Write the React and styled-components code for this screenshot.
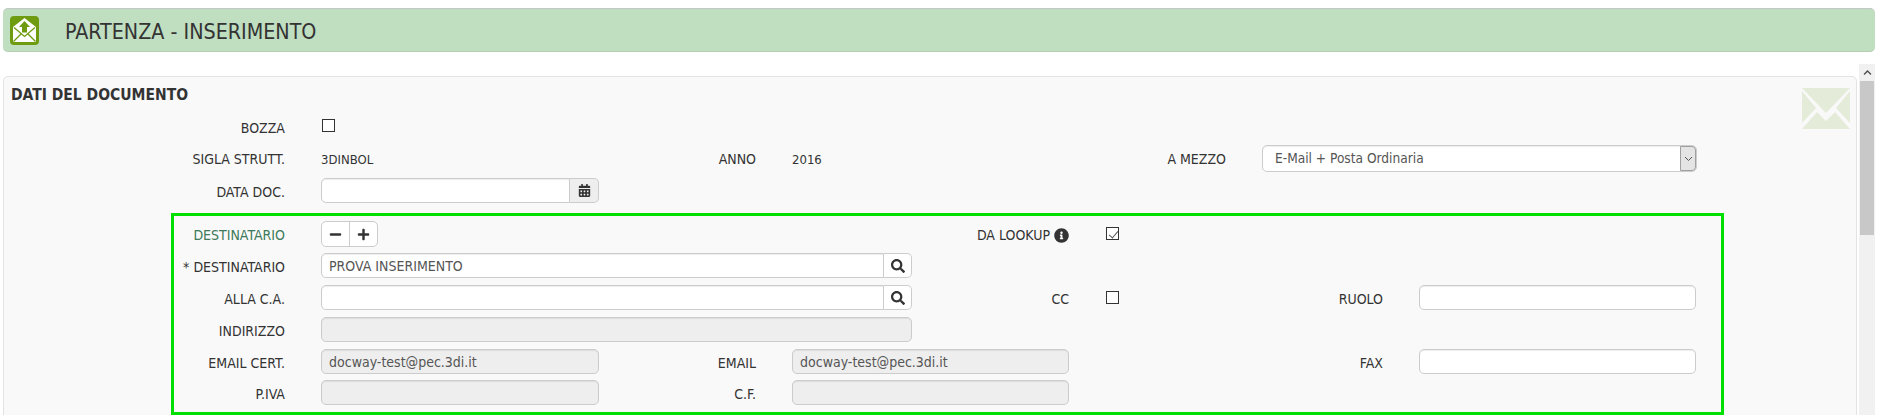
import React from "react";
import styled, { createGlobalStyle } from "styled-components";
import { FaMinus, FaPlus, FaSearch, FaCalendarAlt, FaInfoCircle, FaChevronUp } from "react-icons/fa";

const Global = createGlobalStyle`
  html, body { margin: 0; padding: 0; background: #fff; overflow: hidden; }
  * { box-sizing: border-box; }
`;

const Page = styled.div`
  width: 1880px;
  height: 415px;
  overflow: hidden;
  padding: 8px 5px 0 3px;
  font-family: "DejaVu Sans Condensed", "DejaVu Sans", sans-serif;
  font-size: 14px;
  color: #333;
`;

const TitleBar = styled.header`
  height: 44px;
  display: flex;
  align-items: center;
  gap: 26px;
  padding-left: 7px;
  background: #c0dec0;
  border-top: 1px solid #c4c8c4;
  border-bottom: 1px solid #b4cdb4;
  border-radius: 5px;
`;

const TitleText = styled.h1`
  margin: 2px 0 0;
  font-size: 21.3px;
  font-weight: 400;
  color: #333;
`;

const Body = styled.div`
  margin-top: 12px;
  display: flex;
  gap: 2px;
`;

const Panel = styled.section`
  position: relative;
  flex: 1;
  margin-top: 12px;
  height: 400px;
  background: #f9f9f9;
  border: 1px solid #e3e3e3;
  border-radius: 5px;
  padding: 10px 0 0 8px;
`;

const PanelTitle = styled.h2`
  margin: 0 0 0 -1px;
  font-size: 15.5px;
  line-height: 17px;
  font-weight: 700;
  color: #333;
`;

const Watermark = styled.svg`
  position: absolute;
  top: 11px;
  right: 6px;
  width: 48px;
  height: 41px;
`;

const Scrollbar = styled.div`
  width: 16px;
  height: 351px;
  background: #f1f1f1;
  display: flex;
  flex-direction: column;
`;

const ScrollButton = styled.div`
  height: 17px;
  display: flex;
  align-items: center;
  justify-content: center;
  color: #505050;
  font-size: 9px;
`;

const ScrollThumb = styled.div`
  height: 154px;
  background: #c8c8c8;
  margin: 0 1px;
`;

const FormGrid = styled.div`
  display: grid;
  grid-template-columns: 111px 278px 121px 277px ${(p) => p.$c5}px ${(p) => p.$c6}px;
  grid-template-rows: ${(p) => p.$rows};
  column-gap: 36px;
  align-items: start;
`;

const TopGrid = styled(FormGrid)`
  margin: 10px 0 0 162px;
`;

const RecipientBox = styled.div`
  margin: 10px 0 0 159px;
  width: 1553px;
  height: 202px;
  border: 3px solid #00e000;
  padding: 5px 0 0 0;
`;

const Label = styled.label`
  display: ${(p) => (p.$withIcon ? "flex" : "block")};
  justify-content: flex-end;
  align-items: center;
  gap: 4px;
  text-align: right;
  line-height: 29px;
  white-space: nowrap;
  color: ${(p) => (p.$accent ? "#3c7a5a" : "#333")};
`;

const Value = styled.span`
  font-size: 13px;
  line-height: 29px;
`;

const Check = styled.span`
  display: block;
  position: relative;
  width: 13px;
  height: 13px;
  margin: ${(p) => p.$top || 6}px 0 0 1px;
  border: 1px solid #333;
  background: #fff;
  ${(p) =>
    p.$checked &&
    `&::after {
      content: "";
      position: absolute;
      left: 3.5px;
      top: 0.5px;
      width: 4px;
      height: 8px;
      border: solid #555;
      border-width: 0 1px 1px 0;
      transform: rotate(40deg);
    }`}
`;

const CheckAndLabel = styled.div`
  display: flex;
  justify-content: space-between;
  align-items: flex-start;
`;

const InputGroup = styled.div`
  display: flex;
  height: 25px;
  width: ${(p) => (p.$wide ? "591px" : "auto")};
`;

const Field = styled.div`
  flex: 1;
  height: 25px;
  width: ${(p) => (p.$wide ? "591px" : "auto")};
  line-height: 24px;
  padding: 0 7px;
  color: #555;
  white-space: nowrap;
  background: ${(p) => (p.disabled ? "#eee" : "#fff")};
  border: 1px solid #ccc;
  border-radius: ${(p) => (p.$joined ? "5px 0 0 5px" : "5px")};
  box-shadow: inset 0 1px 1px rgba(0, 0, 0, 0.075);
`;

const Addon = styled.span`
  width: ${(p) => p.$w}px;
  display: flex;
  align-items: center;
  justify-content: center;
  background: ${(p) => (p.$grey ? "#eee" : "#fff")};
  border: 1px solid #ccc;
  border-left: 0;
  border-radius: 0 5px 5px 0;
  color: #333;
  font-size: ${(p) => p.$icon || 13}px;
`;

const ButtonGroup = styled.div`
  display: inline-flex;
  width: 57px;
  height: 26px;
  background: #fff;
  border: 1px solid #ccc;
  border-radius: 5px;
`;

const GroupButton = styled.button`
  flex: 1;
  padding: 0;
  border: 0;
  background: transparent;
  color: #333;
  font-size: 13px;
  display: flex;
  align-items: center;
  justify-content: center;
  & + & { border-left: 1px solid #ccc; }
`;

const Select = styled.div`
  display: flex;
  height: 27px;
  background: #fff;
  border: 1px solid #ccc;
  border-radius: 5px;
  box-shadow: inset 0 1px 1px rgba(0, 0, 0, 0.075);
`;

const SelectText = styled.span`
  flex: 1;
  font-size: 13.6px;
  line-height: 24px;
  padding-left: 12px;
  color: #555;
`;

const SelectArrow = styled.span`
  width: 16px;
  display: flex;
  align-items: center;
  justify-content: center;
  background: #e4e4e4;
  border: 1px solid #a0a0a0;
  border-radius: 0 4px 4px 0;
`;

const Wide = styled.div`
  grid-column: 2 / span 2;
`;

const FirstLabel = styled(Label)`
  grid-column: 1;
`;

const LookupLabel = styled(Label)`
  grid-column: 4;
`;

const FaxLabel = styled(Label)`
  grid-column: 5;
`;

export default function App() {
  return (
    <Page>
      <Global />
      <TitleBar>
        <svg width="29" height="29" viewBox="0 0 29 29">
          <rect width="29" height="29" rx="4" fill="#6f9b10" />
          <path d="M14.5 2 L26 11 V26 H3 V11 Z" fill="#fff" />
          <path d="M3.5 25.5 L11.5 17.5 M25.5 25.5 L17.5 17.5 M4 11.5 L14.5 20.5 L25 11.5" fill="none" stroke="#6f9b10" strokeWidth="1.3" />
          <path d="M14.5 5 L20 11 H17 V16.5 H12 V11 H9 Z" fill="#6f9b10" />
        </svg>
        <TitleText>PARTENZA - INSERIMENTO</TitleText>
      </TitleBar>
      <Body>
        <Panel>
          <PanelTitle>DATI DEL DOCUMENTO</PanelTitle>
          <Watermark viewBox="0 0 48 41">
            <path d="M0 0 H48 L24 25 Z M0 3 L14 20 L0 35 Z M48 3 L34 20 L48 35 Z M0 41 L15 24 L24 33 L33 24 L48 41 Z" fill="#e4ecd9" />
          </Watermark>
          <TopGrid $c5={121} $c6={435} $rows="31px 33px 25px">
            <Label>BOZZA</Label>
            <Check $top={5} />
            <FirstLabel>SIGLA STRUTT.</FirstLabel>
            <Value>3DINBOL</Value>
            <Label>ANNO</Label>
            <Value>2016</Value>
            <Label>A MEZZO</Label>
            <Select>
              <SelectText>E-Mail + Posta Ordinaria</SelectText>
              <SelectArrow>
                <svg width="9" height="6" viewBox="0 0 9 6"><path d="M1 1 L4.5 4.5 L8 1" fill="none" stroke="#555" /></svg>
              </SelectArrow>
            </Select>
            <Label>DATA DOC.</Label>
            <InputGroup>
              <Field $joined />
              <Addon $w={29} $grey><FaCalendarAlt /></Addon>
            </InputGroup>
          </TopGrid>
          <RecipientBox>
            <FormGrid $c5={278} $c6={277} $rows="32px 32px 32px 32px 31px 25px">
              <Label $accent>DESTINATARIO</Label>
              <ButtonGroup>
                <GroupButton><FaMinus /></GroupButton>
                <GroupButton><FaPlus /></GroupButton>
              </ButtonGroup>
              <LookupLabel $withIcon>DA LOOKUP <FaInfoCircle size={15} /></LookupLabel>
              <Check $checked />

              <FirstLabel>* DESTINATARIO</FirstLabel>
              <Wide>
                <InputGroup $wide>
                  <Field $joined>PROVA INSERIMENTO</Field>
                  <Addon $w={28} $icon={14}><FaSearch /></Addon>
                </InputGroup>
              </Wide>

              <FirstLabel>ALLA C.A.</FirstLabel>
              <Wide>
                <InputGroup $wide>
                  <Field $joined />
                  <Addon $w={28} $icon={14}><FaSearch /></Addon>
                </InputGroup>
              </Wide>
              <LookupLabel>CC</LookupLabel>
              <CheckAndLabel>
                <Check />
                <Label>RUOLO</Label>
              </CheckAndLabel>
              <Field />

              <FirstLabel>INDIRIZZO</FirstLabel>
              <Wide><Field $wide disabled /></Wide>

              <FirstLabel>EMAIL CERT.</FirstLabel>
              <Field disabled>docway-test@pec.3di.it</Field>
              <Label>EMAIL</Label>
              <Field disabled>docway-test@pec.3di.it</Field>
              <FaxLabel>FAX</FaxLabel>
              <Field />

              <FirstLabel>P.IVA</FirstLabel>
              <Field disabled />
              <Label>C.F.</Label>
              <Field disabled />
            </FormGrid>
          </RecipientBox>
        </Panel>
        <Scrollbar>
          <ScrollButton><FaChevronUp /></ScrollButton>
          <ScrollThumb />
        </Scrollbar>
      </Body>
    </Page>
  );
}
